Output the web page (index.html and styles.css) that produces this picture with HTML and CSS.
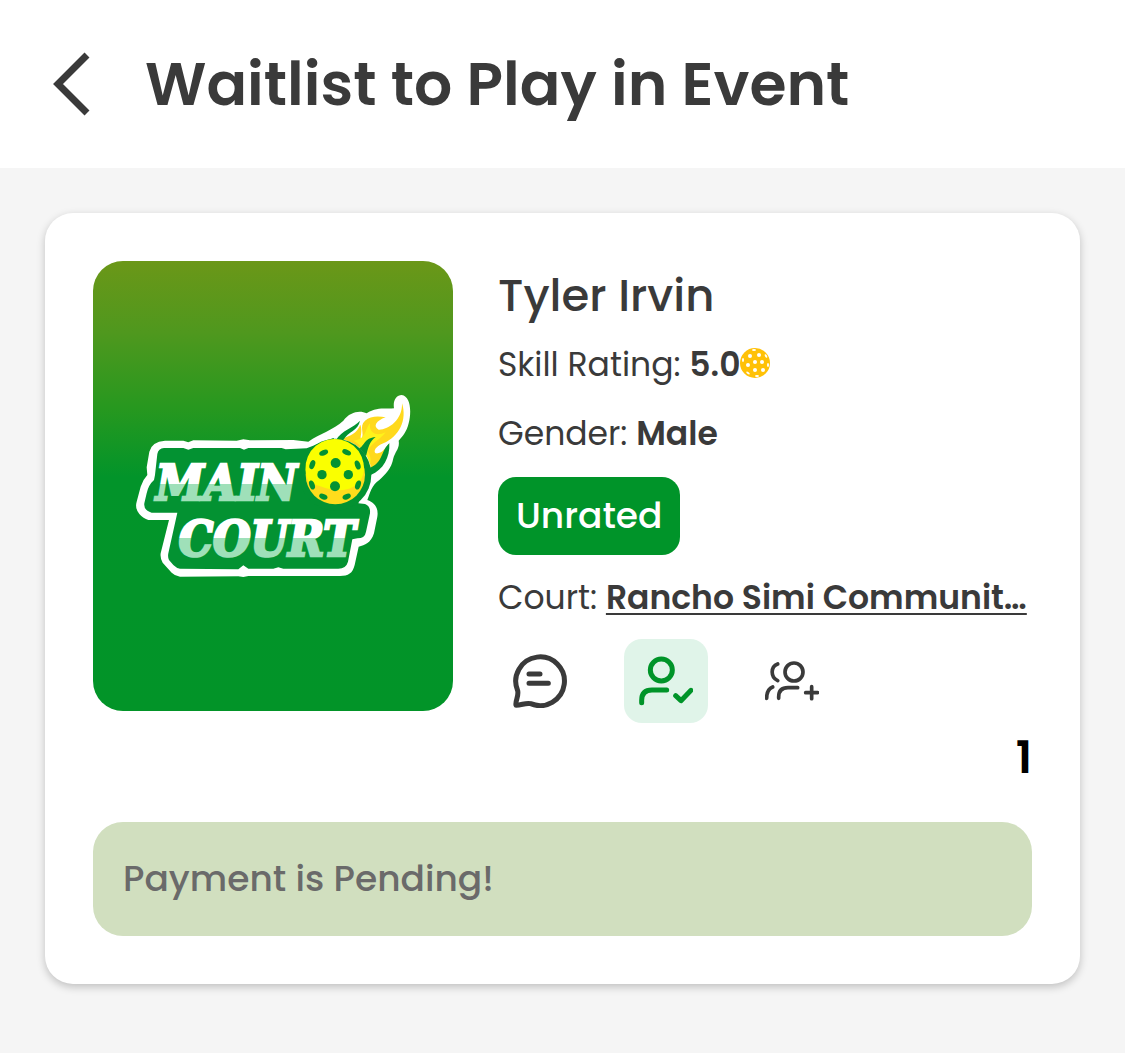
FILE: index.html
```html
<!DOCTYPE html>
<html lang="en">
<head>
    <meta charset="UTF-8">
    <meta name="viewport" content="width=device-width, initial-scale=1.0">
    <title>Waitlist to Play in Event</title>
    <link rel="stylesheet" href="styles.css">
</head>
<body>
    <header class="header">
        <button class="back-btn" type="button" aria-label="Back">
            <svg width="38" height="64" viewBox="0 0 38 64"><path d="M35 3L6 32l29 29" fill="none" stroke="currentColor" stroke-width="7"/></svg>
        </button>
        <h1 class="title">Waitlist to Play in Event</h1>
    </header>

    <main class="content">
        <article class="card">
            <div class="player">
                <!-- Player picture -->
                <div class="avatar">
                    <svg class="logo" viewBox="-6 3 930 630">
                        <defs>
                            <linearGradient id="main-fill" gradientUnits="userSpaceOnUse" x1="0" y1="211" x2="0" y2="411">
                                <stop offset="0.5" stop-color="#fff"/>
                                <stop offset="0.5" stop-color="#9fe0b9"/>
                            </linearGradient>
                            <linearGradient id="court-fill" gradientUnits="userSpaceOnUse" x1="0" y1="374" x2="0" y2="574">
                                <stop offset="0.5" stop-color="#fff"/>
                                <stop offset="0.5" stop-color="#9fe0b9"/>
                            </linearGradient>
                        </defs>
                        <path fill="#fff" d="M135 182L190 182 205 187 220 181 350 182 370 178 390 181 520 180 565 185C600 160 640 150 670 122C690 95 720 90 740 100C770 80 800 88 822 85C818 60 830 45 845 45C870 48 876 90 866 130C860 155 848 170 836 182C840 205 825 215 820 235C815 265 795 285 778 300C755 315 750 340 742 360C765 368 776 385 772 410L762 460C752 490 735 495 716 500L704 555C698 580 685 588 660 588L385 588 370 591 355 589 180 590Q165 588 155 578L128 548Q120 535 122 520L147 420 85 420Q70 416 58 402Q44 385 50 365L62 320Q68 300 82 285L80 262 88 215Q95 185 135 182Z"/>
                        <path fill="#039232" d="M132 204L190 204 205 209 220 204 360 204 372 209 385 204 485 204 497 208 560 205 640 174 752 284 715 370 735 372Q752 378 750 400L738 455Q735 475 712 475L697 478 684 545Q678 566 655 566L490 566 475 562 460 566 385 566 370 556 355 568 180 566Q170 565 160 555L147 540Q142 530 146 515L172 398 95 398Q70 390 73 370L80 340Q85 315 102 300L105 285 112 222Q115 205 132 204Z"/>
                        <path fill="#ffd91c" d="M662 176C690 170 712 158 721 134C729 155 718 172 724 178C735 160 716 140 735 122C750 108 775 108 797 112C768 122 758 140 776 149C805 150 848 120 846 70C862 120 838 170 790 190C765 200 760 215 767 220C785 223 795 205 808 190C800 225 775 255 752 270C755 230 720 190 662 176Z"/>
                        <path fill="#fff21a" d="M700 182C740 180 735 145 750 130C746 160 770 170 797 157C780 180 748 192 744 216C750 226 755 238 750 252C740 220 725 195 700 182Z"/>
                        <path fill="#039232" d="M648 180C665 150 700 145 720 122C715 152 684 154 670 180ZM718 205C735 195 732 175 767 171C748 185 745 202 738 228ZM748 264C790 250 782 212 808 190C810 232 790 270 752 285Z"/>
                        <circle cx="646" cy="284" r="108" fill="#039232"/>
                        <circle cx="646" cy="284" r="89" fill="#ffdc1c"/>
                        <path fill="#faff00" d="M568 309A88 88 0 1 1 732 270C728 310 695 334 650 330C615 328 588 312 568 309Z"/>
                        <g fill="#039232">
                            <circle cx="647" cy="249" r="15"/>
                            <circle cx="606" cy="284" r="14"/>
                            <circle cx="685" cy="284" r="14"/>
                            <circle cx="645" cy="319" r="15"/>
                            <ellipse cx="611" cy="218" rx="14" ry="8" transform="rotate(-22 611 218)"/>
                            <ellipse cx="680" cy="217" rx="14" ry="8" transform="rotate(24 680 217)"/>
                            <ellipse cx="577" cy="254" rx="8" ry="14" transform="rotate(20 577 254)"/>
                            <ellipse cx="713" cy="255" rx="8" ry="14" transform="rotate(-20 713 255)"/>
                            <ellipse cx="576" cy="315" rx="8" ry="14" transform="rotate(-20 576 315)"/>
                            <ellipse cx="714" cy="315" rx="8" ry="14" transform="rotate(20 714 315)"/>
                            <ellipse cx="610" cy="350" rx="13" ry="8" transform="rotate(22 610 350)"/>
                            <ellipse cx="680" cy="350" rx="13" ry="8" transform="rotate(-22 680 350)"/>
                        </g>
                        <text class="logo-text" x="108" y="361" fill="url(#main-fill)" stroke="url(#main-fill)">MAIN</text>
                        <text class="logo-text" x="176" y="529" fill="url(#court-fill)" stroke="url(#court-fill)">COURT</text>
                    </svg>
                </div>

                <div class="info">
                    <h2 class="name">Tyler Irvin</h2>
                    <p class="row">Skill Rating: <strong>5.0</strong><svg class="ball" width="30" height="30" viewBox="0 0 30 30">
                            <circle cx="15" cy="15" r="15" fill="#ffc107"/>
                            <g fill="#fff">
                                <circle cx="15" cy="14" r="2"/>
                                <circle cx="8" cy="17" r="2"/>
                                <circle cx="10" cy="8" r="2"/>
                                <circle cx="19" cy="7" r="2"/>
                                <circle cx="22" cy="14" r="2"/>
                                <circle cx="15" cy="22" r="2"/>
                                <circle cx="23" cy="22" r="2"/>
                                <ellipse cx="14" cy="2" rx="2" ry="1"/>
                                <ellipse cx="3" cy="12" rx="1" ry="2"/>
                                <ellipse cx="26" cy="8" rx="1" ry="2" transform="rotate(-30 26 8)"/>
                                <ellipse cx="28" cy="17" rx="1" ry="2"/>
                                <ellipse cx="8" cy="25" rx="2" ry="1" transform="rotate(35 8 25)"/>
                                <ellipse cx="17" cy="28" rx="2" ry="1"/>
                            </g>
                        </svg>
                    </p>
                    <p class="row">Gender: <strong>Male</strong></p>
                    <span class="badge">Unrated</span>
                    <p class="row court">Court: <a href="#">Rancho Simi Communit…</a></p>

                    <div class="actions">
                        <button class="action" type="button" aria-label="Message">
                            <svg viewBox="0 0 162 162" stroke-width="15">
                                <path d="M14 110A73 73 0 1 1 53 149C38 145 26 154 9 154C6 140 18 128 14 110Z"/>
                                <path d="M48 60h33M48 88h58"/>
                            </svg>
                        </button>
                        <button class="action active" type="button" aria-label="Friend">
                            <svg viewBox="0 0 162 162" stroke-width="15">
                                <circle cx="67" cy="48" r="33"/>
                                <path d="M8 146v-7Q8 108 39 108h44"/>
                                <path d="M110 125l16 15 30-31"/>
                            </svg>
                        </button>
                        <button class="action" type="button" aria-label="Add to group">
                            <svg viewBox="0 0 162 162" stroke-width="11">
                                <circle cx="87" cy="54" r="27"/>
                                <path d="M41 133v-4Q41 101 69 101h29"/>
                                <path d="M38 30C16 38 16 70 38 80M5 133C5 115 10 104 23 99"/>
                                <path d="M122 116h36M140 98v36"/>
                            </svg>
                        </button>
                    </div>
                </div>
            </div>

            <p class="position">1</p>
            <p class="status">Payment is Pending!</p>
        </article>
    </main>
</body>
</html>
```
FILE: styles.css
```css
:root {
    --text-color: #3a3a3a;
    --green: #009429;
    --light-green: #e0f4e9;
}

* {
    box-sizing: border-box;
    margin: 0;
    padding: 0;
}

body {
    background-color: #f5f5f5;
    color: var(--text-color);
    font-family: Poppins, Inter, sans-serif;
    min-height: 100vh;
}

button {
    background: none;
    border: none;
    color: inherit;
    cursor: pointer;
}

.header {
    display: flex;
    align-items: center;
    gap: 55px;
    padding: 39px 52px;
    background: white;
}

.back-btn {
    display: flex;
}

.title {
    font-size: 60px;
    line-height: 90px;
    font-weight: 600;
}

.content {
    padding: 45px;
}

.card {
    background: white;
    border-radius: 28px;
    box-shadow: 0 3px 8px rgba(0, 0, 0, 0.22);
    padding: 48px;
}

.player {
    display: grid;
    grid-template-columns: 360px minmax(0, 1fr);
    align-items: start;
    gap: 45px;
}

.avatar {
    display: flex;
    align-items: center;
    justify-content: center;
    height: 450px;
    border-radius: 30px;
    background: linear-gradient(#6b9718, #4f981e 16%, #26981f 33%, #02942a 48%, #029428);
}

.logo {
    width: 310px;
}

.logo-text {
    font-family: "DejaVu Serif Condensed", "DejaVu Serif", serif;
    font-size: 144px;
    font-weight: bold;
    font-style: italic;
    stroke-width: 8px;
}

.name {
    font-size: 45px;
    line-height: 69px;
    font-weight: 500;
}

.row {
    font-size: 33px;
    line-height: 69px;
    white-space: nowrap;
}

.row strong,
.row a {
    font-weight: 600;
}

.row a {
    color: inherit;
    text-decoration-thickness: 2px;
    text-underline-offset: 4px;
}

.ball {
    vertical-align: -2px;
}

.badge {
    display: block;
    width: fit-content;
    margin: 9px 0 8px;
    padding: 0 18px;
    border-radius: 18px;
    background: var(--green);
    color: white;
    font-size: 36px;
    line-height: 78px;
    font-weight: 500;
}

.court {
    overflow: hidden;
    text-overflow: ellipsis;
}

.actions {
    display: flex;
    gap: 42px;
    margin-top: 7px;
}

.action {
    display: flex;
    padding: 15px;
    border-radius: 18px;
}

.action.active {
    background: var(--light-green);
    color: var(--green);
}

.action svg {
    width: 54px;
    height: 54px;
    fill: none;
    stroke: currentColor;
    stroke-linecap: round;
    stroke-linejoin: round;
}

.position {
    color: black;
    font-size: 45px;
    line-height: 69px;
    font-weight: 600;
    text-align: right;
}

.status {
    margin-top: 30px;
    padding: 30px;
    border-radius: 30px;
    background: #d1dfbf;
    color: #6a6a6a;
    font-size: 36px;
    line-height: 54px;
    font-weight: 500;
}

@media (max-width: 800px) {
    .player {
        grid-template-columns: 1fr;
    }
}
```
